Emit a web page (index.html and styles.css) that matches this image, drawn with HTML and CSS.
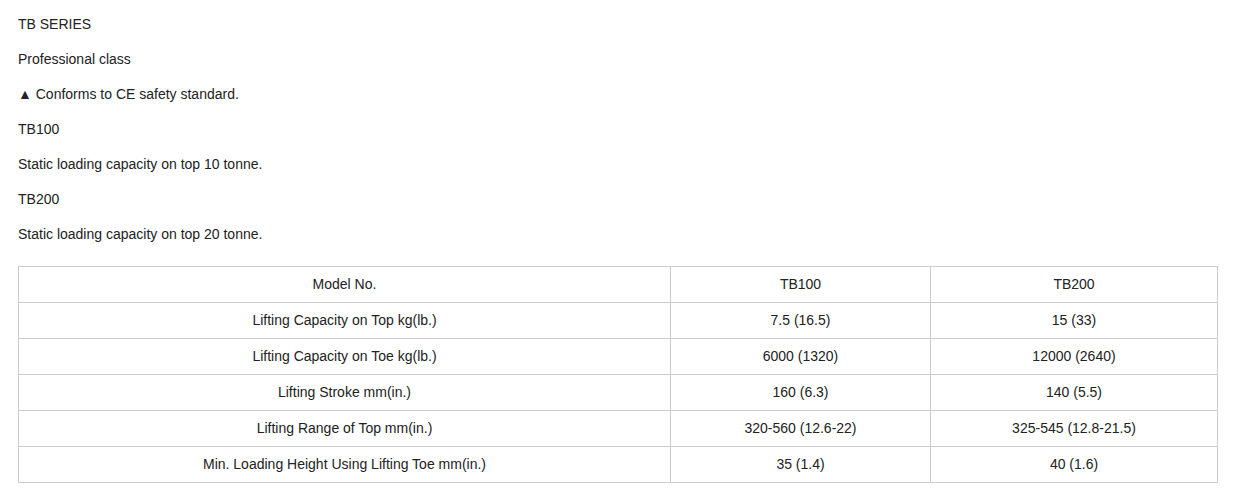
FILE: index.html
```html
<!DOCTYPE html>
<html>
<head>
<meta charset="utf-8">
<link rel="stylesheet" href="styles.css">
</head>
<body>
<div class="content">
  <p>TB SERIES</p>
  <p>Professional class</p>
  <p>▲ Conforms to CE safety standard.</p>
  <p>TB100</p>
  <p>Static loading capacity on top 10 tonne.</p>
  <p>TB200</p>
  <p>Static loading capacity on top 20 tonne.</p>
  <table class="spec">
    <colgroup>
      <col class="c1"><col class="c2"><col class="c3">
    </colgroup>
    <tr><td>Model No.</td><td>TB100</td><td>TB200</td></tr>
    <tr><td>Lifting Capacity on Top kg(lb.)</td><td>7.5 (16.5)</td><td>15 (33)</td></tr>
    <tr><td>Lifting Capacity on Toe kg(lb.)</td><td>6000 (1320)</td><td>12000 (2640)</td></tr>
    <tr><td>Lifting Stroke mm(in.)</td><td>160 (6.3)</td><td>140 (5.5)</td></tr>
    <tr><td>Lifting Range of Top mm(in.)</td><td>320-560 (12.6-22)</td><td>325-545 (12.8-21.5)</td></tr>
    <tr><td>Min. Loading Height Using Lifting Toe mm(in.)</td><td>35 (1.4)</td><td>40 (1.6)</td></tr>
  </table>
</div>
</body>
</html>
```

FILE: styles.css
```css
html, body {
  margin: 0;
  padding: 0;
  background: #fff;
}
body {
  font-family: "Liberation Sans", Arial, sans-serif;
  font-size: 14px;
  color: #222;
}
.content {
  padding: 14px 17px 0 18px;
}
.content p {
  margin: 0 0 15px 0;
  line-height: 20px;
}
.spec {
  border-collapse: collapse;
  width: 1199px;
  margin-top: 22px;
  table-layout: fixed;
}
.spec .c1 { width: 652px; }
.spec .c2 { width: 260px; }
.spec .c3 { width: 287px; }
.spec td {
  border: 1px solid #cccccc;
  height: 36px;
  padding: 0 8px 2px 8px;
  text-align: center;
  vertical-align: middle;
  line-height: 20px;
  box-sizing: border-box;
}
```
